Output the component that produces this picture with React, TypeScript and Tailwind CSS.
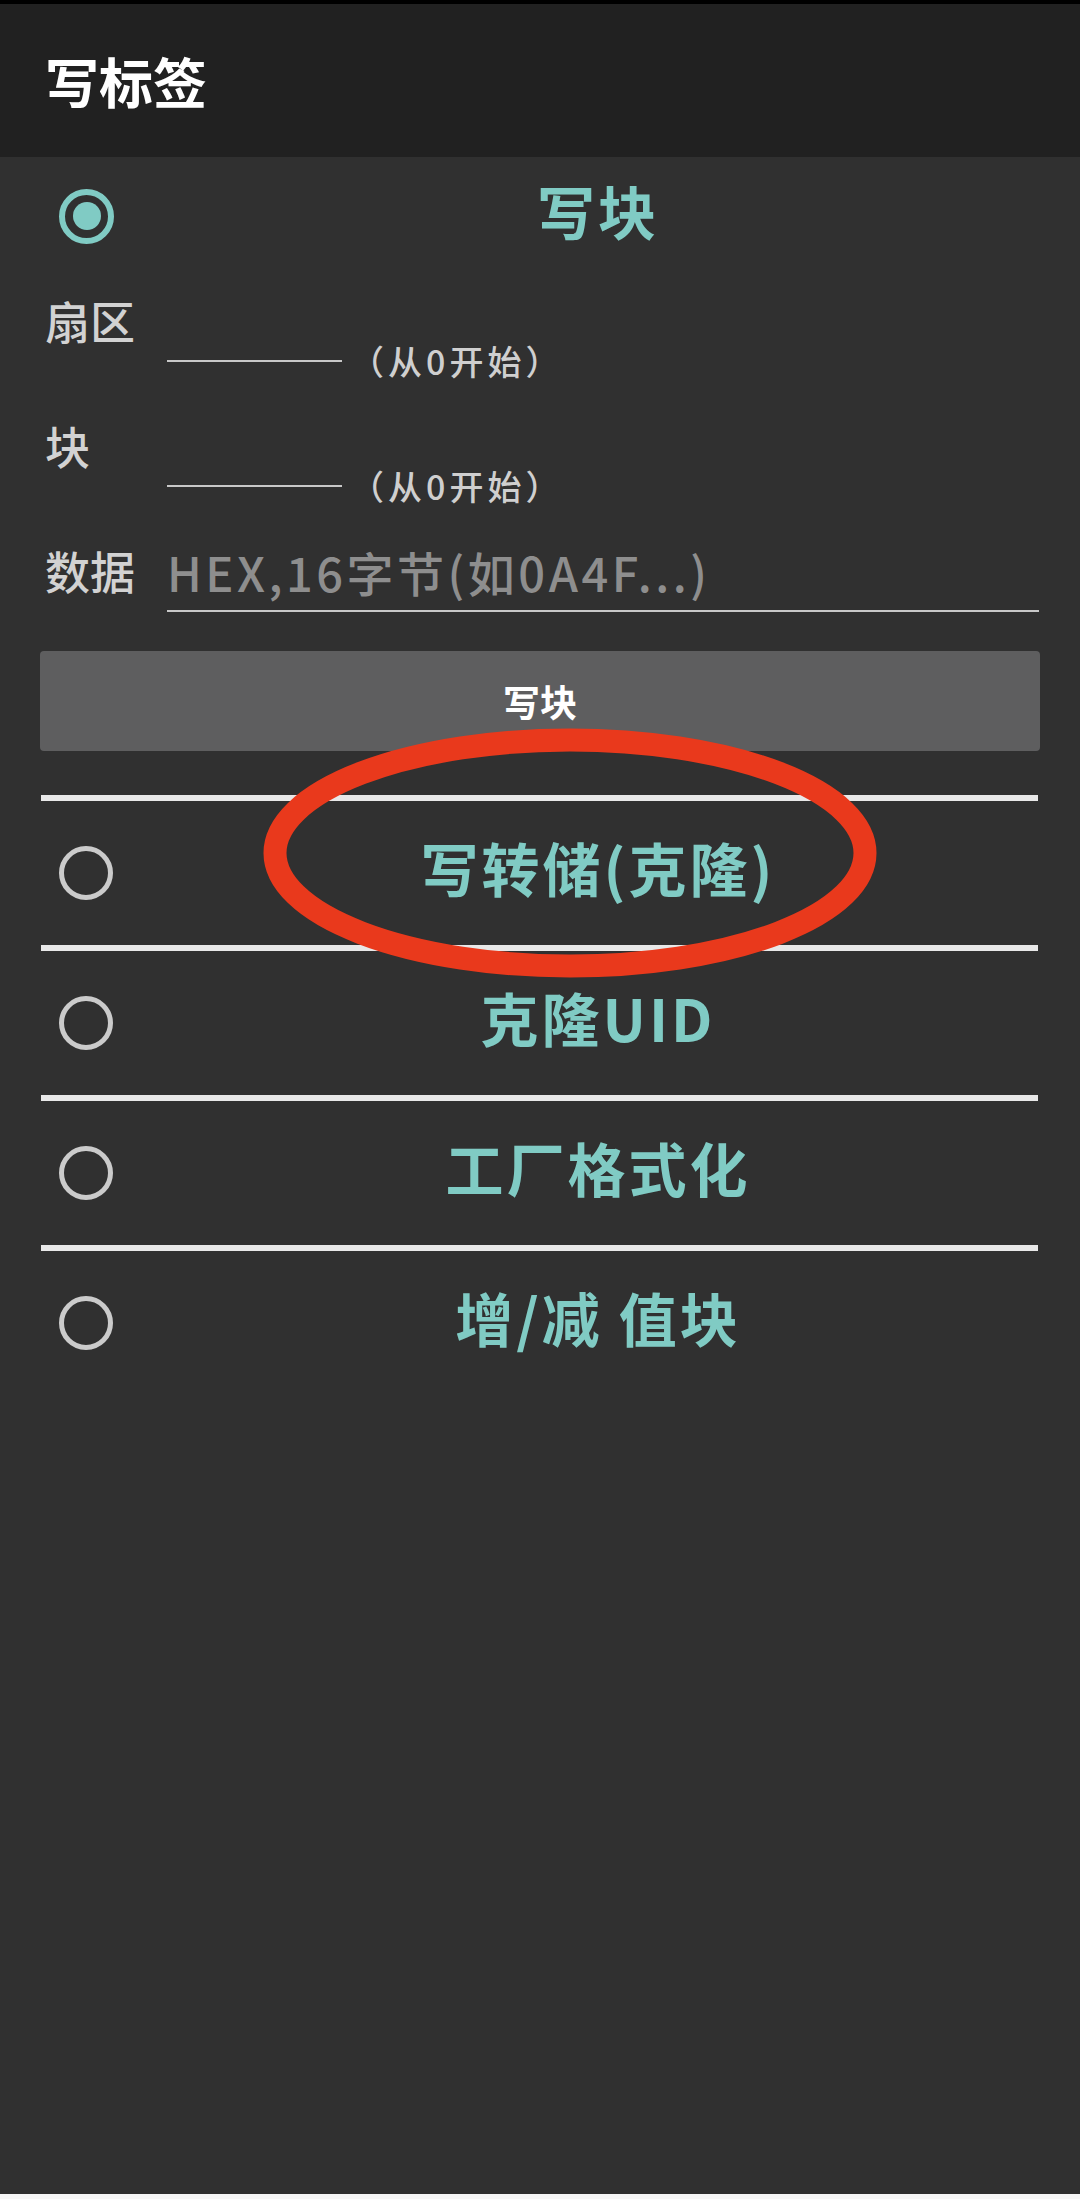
import React from 'react';

const font = { fontFamily: '"Noto Sans CJK SC", "Noto Sans", sans-serif' };

function Radio({ checked = false }: { checked?: boolean }) {
  if (checked) {
    return (
      <div className="w-[55px] h-[55px] rounded-full border-[6px] border-[#80cbc4] flex items-center justify-center">
        <div className="w-[28px] h-[28px] rounded-full bg-[#80cbc4]" />
      </div>
    );
  }
  return <div className="w-[54px] h-[54px] rounded-full border-[5px] border-[#cbcbcb]" />;
}

function OptionRow({ label, checked, height }: { label: string; checked?: boolean; height: string }) {
  return (
    <div className={`flex items-center ${height}`}>
      <div className="w-[117px] pl-[18px] shrink-0">
        <Radio checked={checked} />
      </div>
      <div className="flex-1 mb-[12px] text-center text-[58px] font-bold leading-none tracking-[3px] text-[#80cbc4]">
        {label}
      </div>
    </div>
  );
}

function IndexField({ label }: { label: string }) {
  return (
    <div className="flex items-start h-[125px]">
      <div className="w-[126px] pl-[4px] text-[45px] font-medium leading-none text-[#d2d2d2]">{label}</div>
      <div className="w-[175px] h-[64px] border-b-2 border-[#c8c8c8]" />
      <div className="ml-[8px] mt-[46px] text-[34px] font-medium leading-none tracking-[4px] text-[#cfcfcf]">
        （从0开始）
      </div>
    </div>
  );
}

export default function App() {
  return (
    <div className="relative w-[1080px] h-[2199px] flex flex-col bg-[#303030] overflow-hidden" style={font}>
      <div className="h-[4px] bg-black" />
      <header className="h-[153px] bg-[#212121] flex items-center pl-[45px]">
        <h1 className="text-[54px] font-bold leading-none text-white">写标签</h1>
      </header>

      <main className="flex-1 pl-[41px] pr-[42px]">
        <OptionRow label="写块" checked height="h-[118px]" />

        {/* block write form */}
        <div className="mt-[23px]">
          <IndexField label="扇区" />
          <IndexField label="块" />
          <div className="flex items-start">
            <div className="w-[126px] pl-[4px] text-[45px] font-medium leading-none text-[#d2d2d2]">数据</div>
            <div className="flex-1 mr-[-1px] h-[64px] border-b-2 border-[#c8c8c8] text-[47px] font-medium leading-none tracking-[3.5px] text-[#8e8e8e]">
              HEX,16字节(如0A4F...)
            </div>
          </div>
        </div>

        <button className="mt-[39px] ml-[-1px] w-[1000px] h-[100px] rounded-[4px] bg-[#5e5e5f] text-white text-[37px] font-bold leading-none flex items-center justify-center">
          写块
        </button>

        <div className="mt-[44px] h-[6px] bg-[#e8e8e8]" />
        <OptionRow label="写转储(克隆)" height="h-[144px]" />
        <div className="h-[6px] bg-[#e8e8e8]" />
        <OptionRow label="克隆UID" height="h-[144px]" />
        <div className="h-[6px] bg-[#e8e8e8]" />
        <OptionRow label="工厂格式化" height="h-[144px]" />
        <div className="h-[6px] bg-[#e8e8e8]" />
        <OptionRow label="增/减 值块" height="h-[144px]" />
      </main>

      <div className="h-[5px] bg-[#f7f7f7]" />

      {/* red annotation circle */}
      <svg className="absolute left-0 top-0 pointer-events-none" width="1080" height="2199">
        <ellipse cx="570" cy="853" rx="295" ry="113" fill="none" stroke="#e9391c" strokeWidth="23" />
      </svg>
    </div>
  );
}
